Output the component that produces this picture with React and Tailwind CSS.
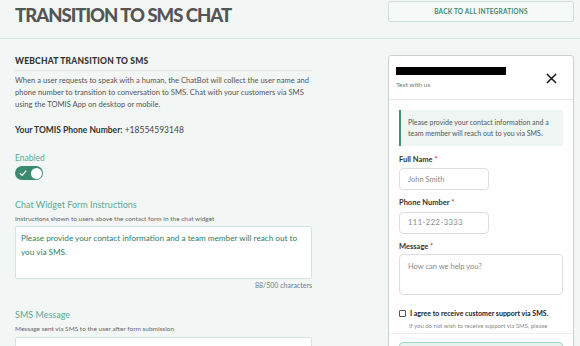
import React, { useState } from 'react';

function Toggle({ on, onChange }) {
  return (
    <button
      type="button"
      onClick={() => onChange(!on)}
      className={`relative flex h-[14px] w-[28px] items-center rounded-full ${on ? 'bg-[#3a8a70]' : 'bg-gray-300'}`}
    >
      <svg viewBox="0 0 10 10" className="absolute left-[4px] h-[8px] w-[8px]">
        <path d="M1 5.2 L4 8 L9 2" fill="none" stroke="white" strokeWidth="1.4" />
      </svg>
      <span className={`absolute top-[1.5px] h-[11px] w-[11px] rounded-full bg-white ${on ? 'left-[15.5px]' : 'left-[1.5px]'}`} />
    </button>
  );
}

function ChatWidget() {
  return (
    <div className="h-[300px] w-[186px] overflow-hidden rounded-t-[3px] border border-[#cfcfcf] bg-white">
      {/* Header */}
      <div className="flex h-[44px] items-start justify-between border-b border-[#e6e6e6] pl-[7px] pr-[16px] pt-[11px]">
        <div>
          <div className="h-[8px] w-[110px] bg-black" />
          <div className="mt-[5px] text-[6.5px] text-[#777]">Text with us</div>
        </div>
        <svg viewBox="0 0 12 12" className="mt-[6px] h-[11px] w-[11px]">
          <path d="M1 1 L11 11 M11 1 L1 11" stroke="#111" strokeWidth="1.6" />
        </svg>
      </div>

      <div className="px-[10px] pt-[10px]">
        {/* Info */}
        <div className="border-l-[2px] border-[#3e9277] bg-[#eef5f3] px-[7px] py-[7px] text-[7px] leading-[11px] text-[#555]">
          Please provide your contact information and a team member will reach out to you via SMS.
        </div>

        <div className="mt-[8px] text-[7.5px] font-bold text-[#333]">
          Full Name <span className="text-[#d9363e]">*</span>
        </div>
        <div className="mt-[3px] flex h-[22px] w-[90px] items-center rounded-[4px] border border-[#dedede] px-[8px] text-[7.5px] text-[#888]">
          John Smith
        </div>

        <div className="mt-[7px] text-[7.5px] font-bold text-[#333]">
          Phone Number <span className="text-[#d9363e]">*</span>
        </div>
        <div className="mt-[3px] flex h-[22px] w-[90px] items-center rounded-[4px] border border-[#dedede] px-[8px] text-[7.5px] tracking-[0.5px] text-[#888]">
          111-222-3333
        </div>

        <div className="mt-[7px] text-[7.5px] font-bold text-[#333]">
          Message <span className="text-[#d9363e]">*</span>
        </div>
        <div className="mt-[2px] h-[41px] w-full rounded-[4px] border border-[#dedede] px-[8px] pt-[6px] text-[7.5px] text-[#888]">
          How can we help you?
        </div>

        <label className="mt-[13px] flex items-center gap-[4px] text-[7px] font-bold text-[#222]">
          <span className="h-[7px] w-[7px] rounded-[1px] border border-[#555]" />
          I agree to receive customer support via SMS.
        </label>
        <div className="mt-[3px] pl-[10px] text-[6px] text-[#888]">
          If you do not wish to receive support via SMS, please
        </div>
      </div>
      <div className="mt-[3px] border-t border-[#eee] px-[10px] pt-[8px]">
        <div className="h-[10px] rounded-t-[4px] border border-[#9fd3c2] bg-[#e7f4ef]" />
      </div>
    </div>
  );
}

export default function App() {
  const [enabled, setEnabled] = useState(true);

  return (
    <div className="h-[346px] w-[580px] overflow-hidden bg-[#f2f7f6] font-['Lato',sans-serif] text-[#555]">
      {/* Header */}
      <div className="flex h-[39px] items-start justify-between border-b border-[#d6e7e3] pl-[15px] pr-[6px] pt-[1px]">
        <h1 className="mt-[1px] text-[18.5px] font-black tracking-[-1px] text-[#555]">TRANSITION TO SMS CHAT</h1>
        <button className="h-[21px] w-[186px] rounded-[2px] border border-[#cde2dd] bg-[#f5f9f8] text-[6.5px] font-bold tracking-[0.2px] text-[#3e8a72]">
          BACK TO ALL INTEGRATIONS
        </button>
      </div>

      <div className="flex justify-between pl-[15px] pr-[6px] pt-[16px]">
        {/* Settings */}
        <div className="w-[297px]">
          <div className="border-b border-[#e0e6e5] pb-[2px] text-[8.5px] font-black tracking-[0.2px] text-[#333]">
            WEBCHAT TRANSITION TO SMS
          </div>
          <p className="mt-[3px] text-[7.6px] leading-[12px] text-[#555]">
            When a user requests to speak with a human, the ChatBot will collect the user name and phone number to transition to conversation to SMS. Chat with your customers via SMS using the TOMIS App on desktop or mobile.
          </p>
          <div className="mt-[14px] text-[8.5px] text-[#444]">
            <span className="font-bold text-[#333]">Your TOMIS Phone Number:</span> +18554593148
          </div>

          <div className="mt-[15px] text-[8.5px] text-[#5ea892]">Enabled</div>
          <div className="mt-[2px]">
            <Toggle on={enabled} onChange={setEnabled} />
          </div>

          <div className="mt-[18px] text-[9px] text-[#5ea892]">Chat Widget Form Instructions</div>
          <div className="mt-[2px] text-[6.5px] text-[#666]">
            Instructions shown to users above the contact form in the chat widget
          </div>
          <div className="mt-[2px] h-[53px] rounded-[2px] border border-[#cfe5df] bg-white px-[5px] pt-[4px] text-[8.2px] leading-[14px] text-[#2f7d63]">
            Please provide your contact information and a team member will reach out to you via SMS.
          </div>
          <div className="mt-[1px] text-right text-[7px] text-[#777]">88/500 characters</div>

          <div className="mt-[18px] text-[9px] text-[#5ea892]">SMS Message</div>
          <div className="mt-[2px] text-[6.5px] text-[#666]">
            Message sent via SMS to the user after form submission
          </div>
          <div className="mt-[4px] h-[40px] rounded-[2px] border border-[#cfe5df] bg-white" />
        </div>

        {/* Preview */}
        <ChatWidget />
      </div>
    </div>
  );
}
